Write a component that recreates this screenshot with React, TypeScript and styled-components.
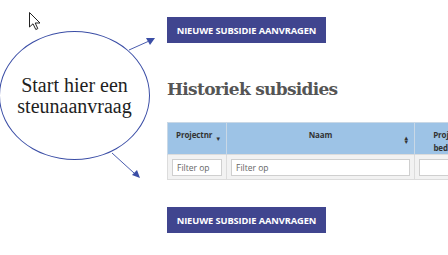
import React from "react";
import styled, { createGlobalStyle } from "styled-components";

const GlobalStyle = createGlobalStyle`
  html, body {
    margin: 0;
    padding: 0;
    background: #fff;
    overflow: hidden;
  }
  body {
    font-family: "Open Sans", "Liberation Sans", sans-serif;
  }
`;

const Page = styled.div`
  position: relative;
  display: flex;
  width: 448px;
  height: 255px;
  overflow: hidden;
`;

const Side = styled.div`
  flex: 0 0 167px;
  padding-top: 31px;
`;

const Bubble = styled.div`
  width: 149px;
  height: 127px;
  margin-left: -1px;
  border: 1.5px solid #3b4ea6;
  border-radius: 50%;
  display: flex;
  align-items: center;
  justify-content: center;
  text-align: center;
  font-family: "Liberation Serif", serif;
  font-size: 20px;
  line-height: 21px;
  color: #1e1e1e;
`;

const Main = styled.div`
  flex: 1;
  padding-top: 17px;
  min-width: 0;
`;

const Button = styled.button`
  display: block;
  width: 159px;
  height: 26px;
  padding: 0;
  border: none;
  background: #40458f;
  color: #fff;
  font-family: "Open Sans", sans-serif;
  font-weight: 700;
  font-size: 9.3px;
  letter-spacing: -0.1px;
  text-transform: uppercase;
  cursor: pointer;
`;

const Heading = styled.h2`
  margin: 33px 0 0;
  height: 27px;
  font-family: "DejaVu Serif", serif;
  font-weight: 700;
  font-size: 17px;
  line-height: 27px;
  color: #555;
  letter-spacing: -0.7px;
`;

const Table = styled.table`
  margin-top: 19px;
  border-collapse: collapse;
  table-layout: fixed;
  width: 312px;
  font-family: "Open Sans", sans-serif;
  font-size: 8px;
`;

const Th = styled.th<{ $w: number; $align?: string }>`
  position: relative;
  width: ${(p) => p.$w}px;
  height: 29px;
  padding: 5px 8px 0;
  box-sizing: border-box;
  background: #9dc3e6;
  border: 1px solid #c9d8e6;
  border-bottom: none;
  color: #333;
  font-weight: 700;
  line-height: 13px;
  letter-spacing: -0.1px;
  text-align: ${(p) => p.$align ?? "center"};
  vertical-align: top;
`;

const Sort = styled.span<{ $bottom: number }>`
  position: absolute;
  right: 5px;
  bottom: ${(p) => p.$bottom}px;
  font-size: 6px;
  color: #333;
  line-height: 4px;
`;

const Td = styled.td`
  height: 24px;
  padding: 0 4px;
  background: #f2f2f2;
  border: 1px solid #dcdcdc;
`;

const Filter = styled.input`
  display: block;
  width: 100%;
  height: 17px;
  box-sizing: border-box;
  border: 1px solid #cfcfcf;
  background: #fff;
  padding: 0 4px;
  font-family: "Open Sans", sans-serif;
  font-size: 8.5px;
  color: #555;
  &::placeholder {
    color: #666;
  }
`;

const SecondButton = styled(Button)`
  margin-top: 27px;
`;

const Overlay = styled.svg`
  position: absolute;
  left: 0;
  top: 0;
  pointer-events: none;
`;

export default function App() {
  return (
    <Page>
      <GlobalStyle />
      <Side>
        <Bubble>
          Start hier een
          <br />
          steunaanvraag
        </Bubble>
      </Side>
      <Main>
        <Button>Nieuwe subsidie aanvragen</Button>
        <Heading>Historiek subsidies</Heading>
        <Table>
          <thead>
            <tr>
              <Th $w={59} $align="left">
                Projectnr
                <Sort $bottom={13}>▼</Sort>
              </Th>
              <Th $w={188}>
                Naam
                <Sort $bottom={10}>
                  ▲
                  <br />▼
                </Sort>
              </Th>
              <Th $w={65}>Project bedrag</Th>
            </tr>
          </thead>
          <tbody>
            <tr>
              <Td>
                <Filter placeholder="Filter op" />
              </Td>
              <Td>
                <Filter placeholder="Filter op" />
              </Td>
              <Td>
                <Filter />
              </Td>
            </tr>
          </tbody>
        </Table>
        <SecondButton>Nieuwe subsidie aanvragen</SecondButton>
      </Main>
      <Overlay width="448" height="255" viewBox="0 0 448 255">
        <g stroke="#4a5cae" strokeWidth="1" fill="none">
          <line x1="129" y1="50" x2="148" y2="41.5" />
          <line x1="112" y1="153" x2="134" y2="173" />
        </g>
        <g fill="#3b4ea6">
          <polygon points="155,38 146,38 150,45" />
          <polygon points="140,178 137,170 132,175" />
        </g>
        <path
          d="M29.5 12.5 L29.5 27 L33 23.8 L35.8 29.5 L37.8 28.6 L35.2 23 L40 23 Z"
          fill="#fff"
          stroke="#222"
          strokeWidth="1"
          strokeLinejoin="round"
        />
      </Overlay>
    </Page>
  );
}
